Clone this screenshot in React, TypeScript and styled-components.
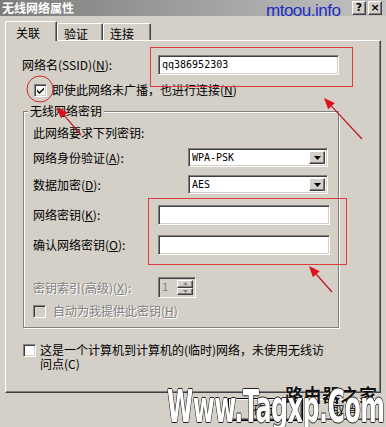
import React from 'react'
import styled, { createGlobalStyle } from 'styled-components'

const GlobalStyle = createGlobalStyle`
  html, body {
    margin: 0;
    padding: 0;
    background: #d4d0c8;
  }
  body {
    font-family: "Noto Sans CJK SC", "Liberation Sans", sans-serif;
    font-size: 12px;
  }
`

const Window = styled.div`
  position: relative;
  width: 386px;
  height: 427px;
  overflow: hidden;
  background: #d4d0c8;
  color: #000;
`

const TitleBar = styled.div`
  display: flex;
  align-items: center;
  height: 16px;
  padding: 0 4px 0 2px;
  background: linear-gradient(90deg, #7c7c7c 0%, #9c9c9c 45%, #c2c2c2 100%);
`

const Title = styled.div`
  flex: 1;
  color: #fff;
  font-weight: bold;
  font-size: 12px;
  line-height: 14px;
`

const CaptionButton = styled.div`
  box-sizing: border-box;
  width: 14px;
  height: 14px;
  margin-left: 2px;
  display: flex;
  align-items: center;
  justify-content: center;
  background: #d4d0c8;
  border-top: 1px solid #fff;
  border-left: 1px solid #fff;
  border-right: 1px solid #404040;
  border-bottom: 1px solid #404040;
  box-shadow: inset -1px -1px 0 #808080;
  font: bold 11px "DejaVu Sans", sans-serif;
  line-height: 12px;
`

const SiteMark = styled.div`
  position: absolute;
  left: 266px;
  top: 2px;
  color: #1c2fc4;
  font: 17px/17px "Liberation Sans", Arial, sans-serif;
  letter-spacing: -0.5px;
`

const TabStrip = styled.div`
  position: relative;
  z-index: 1;
  display: flex;
  align-items: flex-end;
  height: 19px;
  margin-top: 5px;
  padding-left: 5px;
`

const Tab = styled.div<{ $active?: boolean; $w: number }>`
  box-sizing: border-box;
  width: ${p => p.$w}px;
  height: ${p => (p.$active ? 20 : 17)}px;
  margin-bottom: ${p => (p.$active ? -1 : 0)}px;
  padding: ${p => (p.$active ? '4px 0 0 10px' : '3px 0 0 6px')};
  line-height: 14px;
  background: #d4d0c8;
  border-top: 1px solid #fff;
  border-left: 1px solid #fff;
  border-right: 1px solid #404040;
  border-radius: 2px 2px 0 0;
  box-shadow: inset -1px 0 0 #808080;
`

const Panel = styled.div`
  box-sizing: border-box;
  height: 353px;
  margin: 0 5px;
  padding: 14px 0 0 16px;
  border-top: 1px solid #fff;
  border-left: 1px solid #fff;
  border-right: 1px solid #404040;
  border-bottom: 1px solid #404040;
  box-shadow: inset -1px -1px 0 #808080;
`

const FieldRow = styled.div<{ $label: number; $mt: number }>`
  display: grid;
  grid-template-columns: ${p => p.$label}px auto;
  align-items: center;
  margin-top: ${p => p.$mt}px;
  line-height: 14px;
`

const Label = styled.span<{ $disabled?: boolean }>`
  white-space: nowrap;
  color: ${p => (p.$disabled ? '#808080' : '#000')};
  text-shadow: ${p => (p.$disabled ? '1px 1px 0 #fff' : 'none')};
`

const Sunken = styled.div<{ $w: number; $h?: number; $disabled?: boolean }>`
  box-sizing: border-box;
  position: relative;
  width: ${p => p.$w}px;
  height: ${p => p.$h ?? 20}px;
  padding-left: 3px;
  background: ${p => (p.$disabled ? '#d4d0c8' : '#fff')};
  border-top: 1px solid #808080;
  border-left: 1px solid #808080;
  border-right: 1px solid #fff;
  border-bottom: 1px solid #fff;
  box-shadow: inset 1px 1px 0 #404040, inset -1px -1px 0 #d4d0c8;
  font: 10px "DejaVu Sans Mono", "Liberation Mono", monospace;
  line-height: ${p => (p.$h ?? 20) - 2}px;
  color: ${p => (p.$disabled ? '#808080' : '#000')};
`

const DropButton = styled.div`
  position: absolute;
  right: 2px;
  top: 2px;
  bottom: 2px;
  width: 16px;
  display: flex;
  align-items: center;
  justify-content: center;
  box-sizing: border-box;
  background: #d4d0c8;
  border-top: 1px solid #fff;
  border-left: 1px solid #fff;
  border-right: 1px solid #404040;
  border-bottom: 1px solid #404040;
  box-shadow: inset -1px -1px 0 #808080;
`

const SpinStack = styled.div`
  position: absolute;
  right: 2px;
  top: 2px;
  bottom: 2px;
  width: 16px;
  display: flex;
  flex-direction: column;
`

const SpinHalf = styled(DropButton)`
  position: static;
  flex: 1;
  width: 16px;
`

const CheckRow = styled.div<{ $mt: number; $indent: number; $gap: number }>`
  display: flex;
  align-items: flex-start;
  gap: ${p => p.$gap}px;
  margin-top: ${p => p.$mt}px;
  padding-left: ${p => p.$indent}px;
  line-height: 14px;
`

const CheckBox = styled.span<{ $disabled?: boolean }>`
  flex: none;
  box-sizing: border-box;
  width: 13px;
  height: 13px;
  margin-top: 1px;
  display: flex;
  align-items: center;
  justify-content: center;
  background: ${p => (p.$disabled ? '#d4d0c8' : '#fff')};
  border-top: 1px solid #808080;
  border-left: 1px solid #808080;
  border-right: 1px solid #fff;
  border-bottom: 1px solid #fff;
  box-shadow: inset 1px 1px 0 #404040, inset -1px -1px 0 #d4d0c8;
`

const Group = styled.fieldset`
  box-sizing: border-box;
  width: 316px;
  margin: 7px 0 0 1px;
  padding: 8px 0 9px 9px;
  border: 1px solid #808080;
  box-shadow: inset 1px 1px 0 #fff, 1px 1px 0 #fff;
  min-inline-size: auto;
`

const Legend = styled.legend`
  margin-left: -5px;
  padding: 0 2px;
  line-height: 14px;
  background: #d4d0c8;
`

const Note = styled.div`
  line-height: 14px;
`

const ButtonBar = styled.div`
  display: flex;
  justify-content: flex-end;
  gap: 4px;
  margin-top: 5px;
  padding-right: 4px;
`

const PushButton = styled.div<{ $default?: boolean }>`
  box-sizing: border-box;
  width: 75px;
  height: 23px;
  display: flex;
  align-items: center;
  justify-content: center;
  background: #d4d0c8;
  border: 1px solid ${p => (p.$default ? '#000' : '#d4d0c8')};
  box-shadow: inset 1px 1px 0 #fff, inset -1px -1px 0 #404040, inset -2px -2px 0 #808080;
`

const Watermark = styled.div`
  position: absolute;
  left: 167px;
  top: 384px;
  transform: scaleX(0.53);
  transform-origin: left top;
  font: bold 45px/45px "DejaVu Sans", sans-serif;
  color: #fff;
  letter-spacing: -1px;
  text-shadow: 1px 0 0 #222, -1px 0 0 #222, 0 1px 0 #222, 0 -1px 0 #222;
  white-space: nowrap;
  pointer-events: none;
`

const WatermarkCn = styled.div`
  position: absolute;
  left: 285px;
  top: 383px;
  font: bold 18px/22px "Noto Sans CJK SC", sans-serif;
  color: #111;
  letter-spacing: 0.5px;
  text-shadow: 0 0 1px #fff;
  pointer-events: none;
`

const Overlay = styled.svg`
  position: absolute;
  left: 0;
  top: 0;
  pointer-events: none;
`

const Arrow = ({ tip, tail }: { tip: [number, number]; tail: [number, number] }) => {
  const dx = tip[0] - tail[0]
  const dy = tip[1] - tail[1]
  const len = Math.hypot(dx, dy)
  const ux = dx / len
  const uy = dy / len
  const bx = tip[0] - ux * 11
  const by = tip[1] - uy * 11
  const pts = `${tip[0]},${tip[1]} ${bx - uy * 4.5},${by + ux * 4.5} ${bx + uy * 4.5},${by - ux * 4.5}`
  return (
    <g>
      <line x1={tail[0]} y1={tail[1]} x2={bx} y2={by} stroke="#c0141c" strokeWidth="1.2" />
      <polygon points={pts} fill="#e0101a" />
    </g>
  )
}

const Tick = () => (
  <svg width="9" height="9" viewBox="0 0 9 9">
    <path d="M1 3.5 L3.5 6 L8 1.5 L8 3.5 L3.5 8 L1 5.5 Z" fill="#000" />
  </svg>
)

const DownTri = () => (
  <svg width="7" height="4" viewBox="0 0 7 4">
    <path d="M0 0 H7 L3.5 4 Z" fill="#000" />
  </svg>
)

const SmallTri = ({ up }: { up?: boolean }) => (
  <svg width="5" height="3" viewBox="0 0 5 3">
    <path d={up ? 'M0 3 H5 L2.5 0 Z' : 'M0 0 H5 L2.5 3 Z'} fill="#808080" />
  </svg>
)

const App = () => {
  return (
    <Window>
      <GlobalStyle />
      <TitleBar>
        <Title>无线网络属性</Title>
        <CaptionButton>?</CaptionButton>
        <CaptionButton>×</CaptionButton>
      </TitleBar>

      <TabStrip>
        <Tab $active $w={52}>关联</Tab>
        <Tab $w={46}>验证</Tab>
        <Tab $w={48}>连接</Tab>
      </TabStrip>

      <Panel>
        <FieldRow $label={136} $mt={0}>
          <Label>网络名(SSID)(<u>N</u>):</Label>
          <Sunken $w={181}>qq386952303</Sunken>
        </FieldRow>

        <CheckRow $mt={8} $indent={12} $gap={5}>
          <CheckBox><Tick /></CheckBox>
          <span>即使此网络未广播，也进行连接(<u>N</u>)</span>
        </CheckRow>

        <Group>
          <Legend>无线网络密钥</Legend>
          <Note>此网络要求下列密钥:</Note>

          <FieldRow $label={155} $mt={8}>
            <Label>网络身份验证(<u>A</u>):</Label>
            <Sunken $w={140} $h={19}>
              WPA-PSK
              <DropButton><DownTri /></DropButton>
            </Sunken>
          </FieldRow>

          <FieldRow $label={155} $mt={8}>
            <Label>数据加密(<u>D</u>):</Label>
            <Sunken $w={140} $h={19}>
              AES
              <DropButton><DownTri /></DropButton>
            </Sunken>
          </FieldRow>

          <FieldRow $label={125} $mt={11}>
            <Label>网络密钥(<u>K</u>):</Label>
            <Sunken $w={172} />
          </FieldRow>

          <FieldRow $label={125} $mt={10}>
            <Label>确认网络密钥(<u>O</u>):</Label>
            <Sunken $w={172} />
          </FieldRow>

          <FieldRow $label={125} $mt={22}>
            <Label $disabled>密钥索引(高级)(<u>X</u>):</Label>
            <Sunken $w={38} $h={21} $disabled>
              1
              <SpinStack>
                <SpinHalf><SmallTri up /></SpinHalf>
                <SpinHalf><SmallTri /></SpinHalf>
              </SpinStack>
            </Sunken>
          </FieldRow>

          <CheckRow $mt={6} $indent={0} $gap={7}>
            <CheckBox $disabled />
            <Label $disabled>自动为我提供此密钥(<u>H</u>)</Label>
          </CheckRow>
        </Group>

        <CheckRow $mt={15} $indent={1} $gap={4}>
          <CheckBox />
          <span>
            这是一个计算机到计算机的(临时)网络，未使用无线访
            <br />
            问点(C)
          </span>
        </CheckRow>
      </Panel>

      <ButtonBar>
        <PushButton $default>确定</PushButton>
        <PushButton>取消</PushButton>
      </ButtonBar>

      <SiteMark>mtoou.info</SiteMark>
      <WatermarkCn>路由器之家</WatermarkCn>
      <Watermark>Www.Tagxp.Com</Watermark>

      <Overlay width="386" height="427" viewBox="0 0 386 427">
        <rect x="150.5" y="47.5" width="202" height="39" fill="none" stroke="#e03a3a" strokeWidth="1" />
        <rect x="148.5" y="198.5" width="198" height="66" fill="none" stroke="#e03a3a" strokeWidth="1" />
        <circle cx="40" cy="89" r="13" fill="none" stroke="#d02a2a" strokeWidth="1" />
        <Arrow tip={[324, 98]} tail={[362, 139]} />
        <Arrow tip={[57, 107]} tail={[81, 135]} />
        <Arrow tip={[309, 266]} tail={[332, 292]} />
      </Overlay>
    </Window>
  )
}

export default App
